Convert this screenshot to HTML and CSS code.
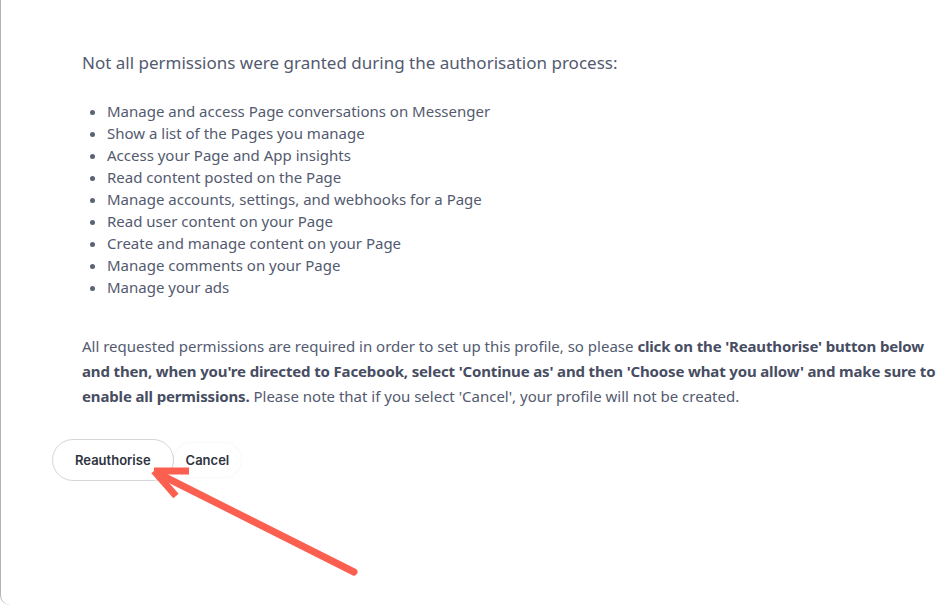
FILE: index.html
```html
<!DOCTYPE html>
<html lang="en">
<head>
    <meta charset="UTF-8">
    <meta name="viewport" content="width=device-width, initial-scale=1.0">
    <title>Reauthorise profile</title>
    <link rel="stylesheet" href="styles.css">
</head>
<body>
    <div class="panel">
        <div class="content">
            <p class="lead">Not all permissions were granted during the authorisation process:</p>
            <ul class="perms">
                <li>Manage and access Page conversations on Messenger</li>
                <li>Show a list of the Pages you manage</li>
                <li>Access your Page and App insights</li>
                <li>Read content posted on the Page</li>
                <li>Manage accounts, settings, and webhooks for a Page</li>
                <li>Read user content on your Page</li>
                <li>Create and manage content on your Page</li>
                <li>Manage comments on your Page</li>
                <li>Manage your ads</li>
            </ul>
            <p class="note">All requested permissions are required in order to set up this profile, so please <b>click on the 'Reauthorise' button below and then, when you're directed to Facebook, select 'Continue as' and then 'Choose what you allow' and make sure to enable all permissions.</b> Please note that if you select 'Cancel', your profile will not be created.</p>
        </div>
        <div class="actions">
            <button class="btn btn-primary">Reauthorise</button>
            <button class="btn btn-plain">Cancel</button>
        </div>
        <!-- annotation arrow -->
        <svg class="arrow" width="947" height="605" viewBox="0 0 947 605">
            <g stroke="#fa5f50" stroke-width="7" stroke-linecap="round" fill="none">
                <line x1="354" y1="572" x2="157" y2="473"/>
                <line x1="154" y1="471" x2="189" y2="471" stroke-linecap="butt"/>
                <line x1="154" y1="471" x2="176" y2="496" stroke-linecap="butt"/>
            </g>
        </svg>
    </div>
</body>
</html>
```

FILE: styles.css
```css
body {
    margin: 0;
    background: #fff;
    font-family: "Noto Sans", Arial, sans-serif;
    color: #535a6f;
}
.panel {
    position: relative;
    height: 605px;
    box-sizing: border-box;
    border-left: 1px solid #b4b4b8;
    border-bottom-left-radius: 10px;
    overflow: hidden;
}
.content {
    padding: 51px 0 0 81px;
    width: 860px;
}
.lead {
    margin: 0;
    font-size: 17px;
    line-height: 24px;
}
.perms {
    margin: 25px 0 0;
    padding-left: 25px;
    font-size: 15px;
    line-height: 22px;
}
.perms li::marker {
    color: #5b6275;
}
.note {
    margin: 36px 0 0;
    font-size: 15px;
    line-height: 25px;
}
.note b {
    font-weight: 700;
    letter-spacing: -0.15px;
    color: #474d62;
}
.actions {
    display: flex;
    align-items: center;
    padding: 30px 0 0 51px;
}
.btn {
    font-family: Inter, "Noto Sans", sans-serif;
    font-size: 13px;
    font-weight: 600;
    color: #2f3340;
    background: #fff;
    border-radius: 21px;
    cursor: pointer;
}
.btn-primary {
    height: 42px;
    padding: 0 22px;
    border: 1px solid #d6d6da;
}
.btn-plain {
    height: 34px;
    padding: 0 12px;
    border: none;
    box-shadow: 0 0 3px rgba(0, 0, 0, 0.06);
}
.arrow {
    position: absolute;
    top: 0;
    left: -1px;
    pointer-events: none;
}
```
